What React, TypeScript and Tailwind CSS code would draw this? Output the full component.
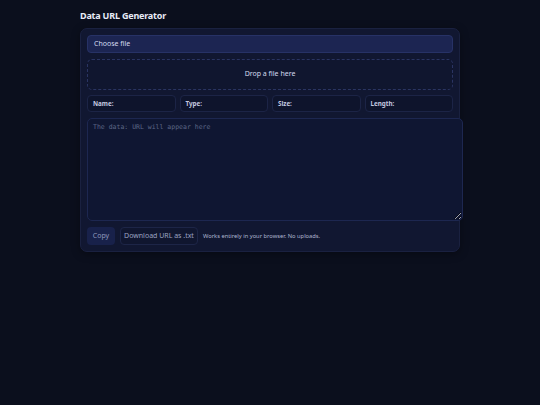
import { useState } from "react";

const stats = ["Name:", "Type:", "Size:", "Length:"];

export default function App() {
  const [url, setUrl] = useState("");

  return (
    <div
      className="min-h-[405px] w-full bg-[#0b0f1d] text-[#dfe4f5]"
      style={{ fontFamily: '"Noto Sans", "Open Sans", sans-serif' }}
    >
      <div className="w-[380px] ml-[80px] pt-[10px]">
        <h1 className="text-[9px] leading-[12px] font-bold tracking-[-0.2px] text-[#e8ebf7]">
          Data URL Generator
        </h1>

        <div className="mt-[6px] rounded-[7px] border border-[#1a2140] bg-[#111731] p-[6px] shadow-[0_2px_8px_rgba(0,0,0,0.35)]">
          <label className="flex h-[18px] items-center rounded-[4px] border border-[#273266] bg-[#1c2552] px-[6px] text-[7px] text-[#d4daf0]">
            Choose file
          </label>

          <div className="mt-[6px] flex h-[31px] items-center justify-center rounded-[5px] border border-dashed border-[#2a3462] bg-[#10162f] text-[7px] font-normal text-[#d4daf0]">
            Drop a file here
          </div>

          <div className="mt-[5px] grid grid-cols-4 gap-[4px]">
            {stats.map((s) => (
              <div
                key={s}
                className="flex h-[17px] items-center rounded-[4px] border border-[#1c2446] bg-[#0e142c] px-[5px] text-[6.25px] font-bold text-[#c4cae0]"
              >
                {s}
              </div>
            ))}
          </div>

          <textarea
            value={url}
            onChange={(e) => setUrl(e.target.value)}
            placeholder="The data: URL will appear here"
            className="mt-[6px] block h-[103px] w-[376px] resize-y rounded-[5px] border border-[#1d2750] bg-[#0f1632] px-[5px] py-[4px] text-[6.5px] leading-[9px] text-[#cfd5ea] placeholder:text-[#5d6686] outline-none"
            style={{ fontFamily: '"DejaVu Sans Mono", monospace' }}
          />

          <div className="mt-[6px] flex items-center gap-[5px]">
            <button className="h-[18px] w-[28px] rounded-[4px] bg-[#18214a] text-[7px] text-[#8e97ba]">
              Copy
            </button>
            <button className="h-[18px] w-[78px] rounded-[4px] border border-[#1d2547] bg-[#10162f] text-[7px] text-[#9ba3c2]">
              Download URL as .txt
            </button>
            <span className="text-[5.75px] text-[#aeb5cf]">
              Works entirely in your browser. No uploads.
            </span>
          </div>
        </div>
      </div>
    </div>
  );
}
